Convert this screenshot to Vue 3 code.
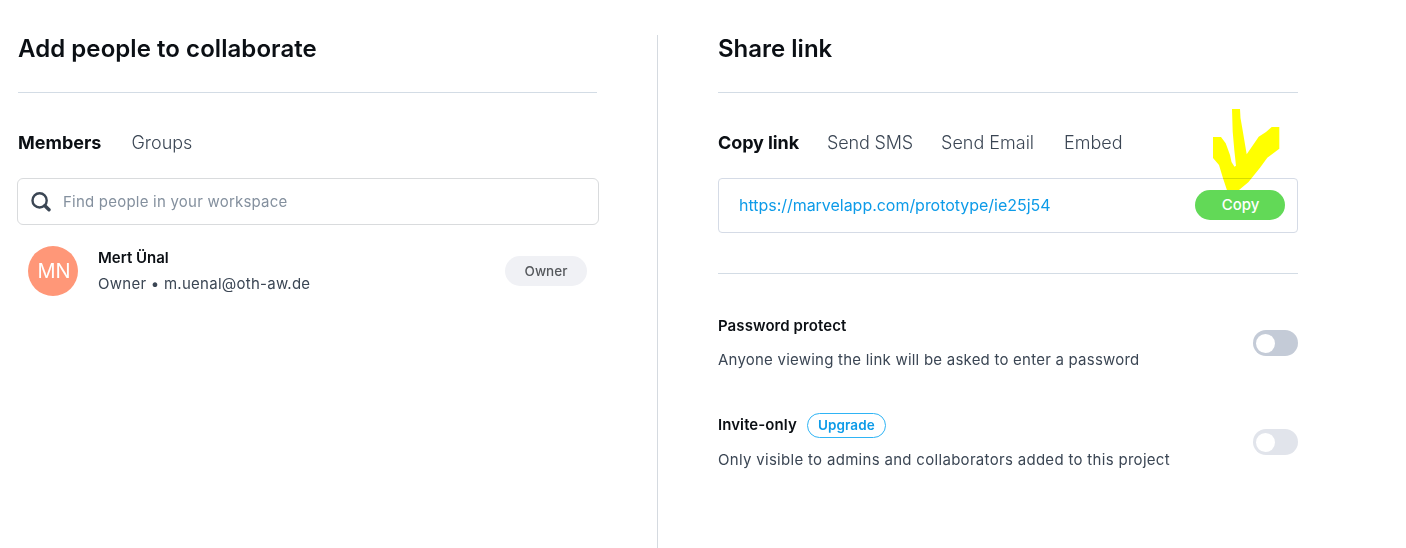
<script setup>
const linkTabs = [
  { label: 'Copy link', cls: 'active' },
  { label: 'Send SMS', cls: 'sms' },
  { label: 'Send Email', cls: 'email' },
  { label: 'Embed', cls: 'embed' },
]
</script>

<template>
  <main class="page">
    <section class="panel people">
      <h2>Add people to collaborate</h2>
      <nav class="tabs">
        <a class="active">Members</a><a>Groups</a>
      </nav>
      <div class="search">
        <svg viewBox="0 0 20 20" width="20" height="20"><circle cx="8.6" cy="8.4" r="7.1" fill="none" stroke="#3b4654" stroke-width="2.4" /><path d="M13.9 13.7 18 17.8" stroke="#3b4654" stroke-width="3.4" stroke-linecap="round" /></svg>
        <span>Find people in your workspace</span>
      </div>
      <div class="member">
        <div class="avatar">MN</div>
        <div class="who">
          <div class="name">Mert Ünal</div>
          <div class="mail">Owner • m.uenal@oth-aw.de</div>
        </div>
        <div class="role">Owner</div>
      </div>
    </section>
    <div class="divider"></div>
    <section class="panel share">
      <h2>Share link</h2>
      <nav class="tabs">
        <a v-for="tab in linkTabs" :key="tab.label" :class="tab.cls">{{ tab.label }}</a>
      </nav>
      <div class="linkbox">
        <span class="url">https://marvelapp.com/prototype/ie25j54</span>
        <button class="copy">Copy</button>
        <svg class="arrow" viewBox="1212 108 68 83" width="68" height="83"><path fill="#ff0" d="M1232 109H1240L1240.5 118 1242.3 128.3 1246.7 154.3 1258.7 136.7 1266 132 1271.7 127H1279.3V148.7L1267.3 157.7 1260 167.7 1248.3 182.3 1238.7 190.3H1227L1223 178.3 1219 165 1213 158V137H1221L1225.7 143.3 1230 155 1231.5 162 1234.5 166.7 1236 165.7 1234.3 150 1232.7 131.7Z" /></svg>
      </div>
      <div class="option first">
        <div>
          <div class="opt-title">Password protect</div>
          <div class="opt-desc">Anyone viewing the link will be asked to enter a password</div>
        </div>
        <div class="toggle"></div>
      </div>
      <div class="option invite">
        <div>
          <div class="opt-title"><span class="invite-label">Invite-only</span><span class="badge">Upgrade</span></div>
          <div class="opt-desc">Only visible to admins and collaborators added to this project</div>
        </div>
        <div class="toggle disabled"></div>
      </div>
    </section>
  </main>
</template>

<style>
body { background: #fff; }
</style>
<style scoped>
* { box-sizing: border-box; }
.page { display: flex; height: 548px; overflow: hidden; padding-left: 18px; font-family: Inter, "Liberation Sans", sans-serif; color: #0b0f14; }
.panel { width: 580px; }
.divider { width: 1px; margin: 35px 60px 0 59px; background: #d5dae0; }
h2 { margin: 0; height: 93px; padding-top: 33px; line-height: 31px; font-size: 24px; font-weight: 600; border-bottom: 1px solid #d3dce5; }
.people h2 { width: 579px; letter-spacing: 0.06px; }
.tabs { display: flex; gap: 30px; margin-top: 37px; height: 48px; line-height: 25px; font-size: 18px; color: #3b4654; font-weight: 300; }
.share .tabs { gap: 28px; }
.active { font-weight: 700; color: #0b0f14; }
.share .active { letter-spacing: -0.1px; }
.sms { letter-spacing: -0.15px; }
.embed { margin-left: 2px; }
.search { display: flex; align-items: center; width: 582px; height: 47px; margin-left: -1px; padding-left: 13px; border: 1px solid #d9dbdd; border-radius: 6px; font-size: 15px; letter-spacing: 0.22px; color: #84909e; }
.search svg { margin-right: 12px; }
.member { display: flex; margin-top: 21px; padding-left: 10px; height: 50px; }
.avatar { width: 50px; height: 50px; padding-left: 2px; border-radius: 50%; background: #ff9778; color: #fff; display: flex; justify-content: center; align-items: center; font-size: 20px; }
.who { margin-left: 20px; width: 407px; }
.name { line-height: 24px; font-size: 15px; font-weight: 600; }
.mail { line-height: 28px; font-size: 15px; letter-spacing: 0.26px; color: #3b4654; }
.role { margin-top: 10px; width: 82px; height: 30px; border-radius: 15px; background: #f0f1f5; color: #55585c; font-size: 13.5px; font-weight: 500; line-height: 30px; text-align: center; }
.linkbox { position: relative; display: flex; align-items: center; justify-content: space-between; height: 55px; padding: 0 12px 2px 20px; border: 1px solid #d5dbe6; border-radius: 4px; font-size: 16px; color: #0d9be8; }
.url { letter-spacing: -0.03px; }
.copy { width: 90px; height: 30px; padding: 0 0 0 1px; border: 0; border-radius: 15px; background: #62d957; color: #fff; font: 500 15px Inter, sans-serif; position: relative; z-index: 1; }
.arrow { position: absolute; left: 493px; top: -71px; mix-blend-mode: multiply; }
.option { display: flex; justify-content: space-between; height: 100px; }
.option.first { margin-top: 40px; padding-top: 39px; height: 140px; border-top: 1px solid #d3dce5; }
.opt-title { display: flex; align-items: center; height: 25px; font-size: 15px; font-weight: 600; letter-spacing: 0.08px; }
.opt-desc { margin-top: 9px; line-height: 25px; font-size: 15px; letter-spacing: 0.225px; color: #3b4654; }
.invite .opt-desc { letter-spacing: 0.305px; }
.invite-label { padding-bottom: 2px; }
.badge { width: 79px; height: 25px; margin-left: 10px; border: 1px solid #2fb4f5; border-radius: 13px; color: #0d9be8; font-size: 13.5px; line-height: 23px; text-align: center; }
.toggle { width: 45px; height: 26px; margin-top: 16px; padding: 4px 3px; border-radius: 13px; background: #c4cbd7; }
.first .toggle { margin-top: 17px; }
.toggle::before { content: ""; display: block; width: 19px; height: 19px; border-radius: 50%; background: #fff; }
.disabled { background: #e1e4eb; }
</style>
